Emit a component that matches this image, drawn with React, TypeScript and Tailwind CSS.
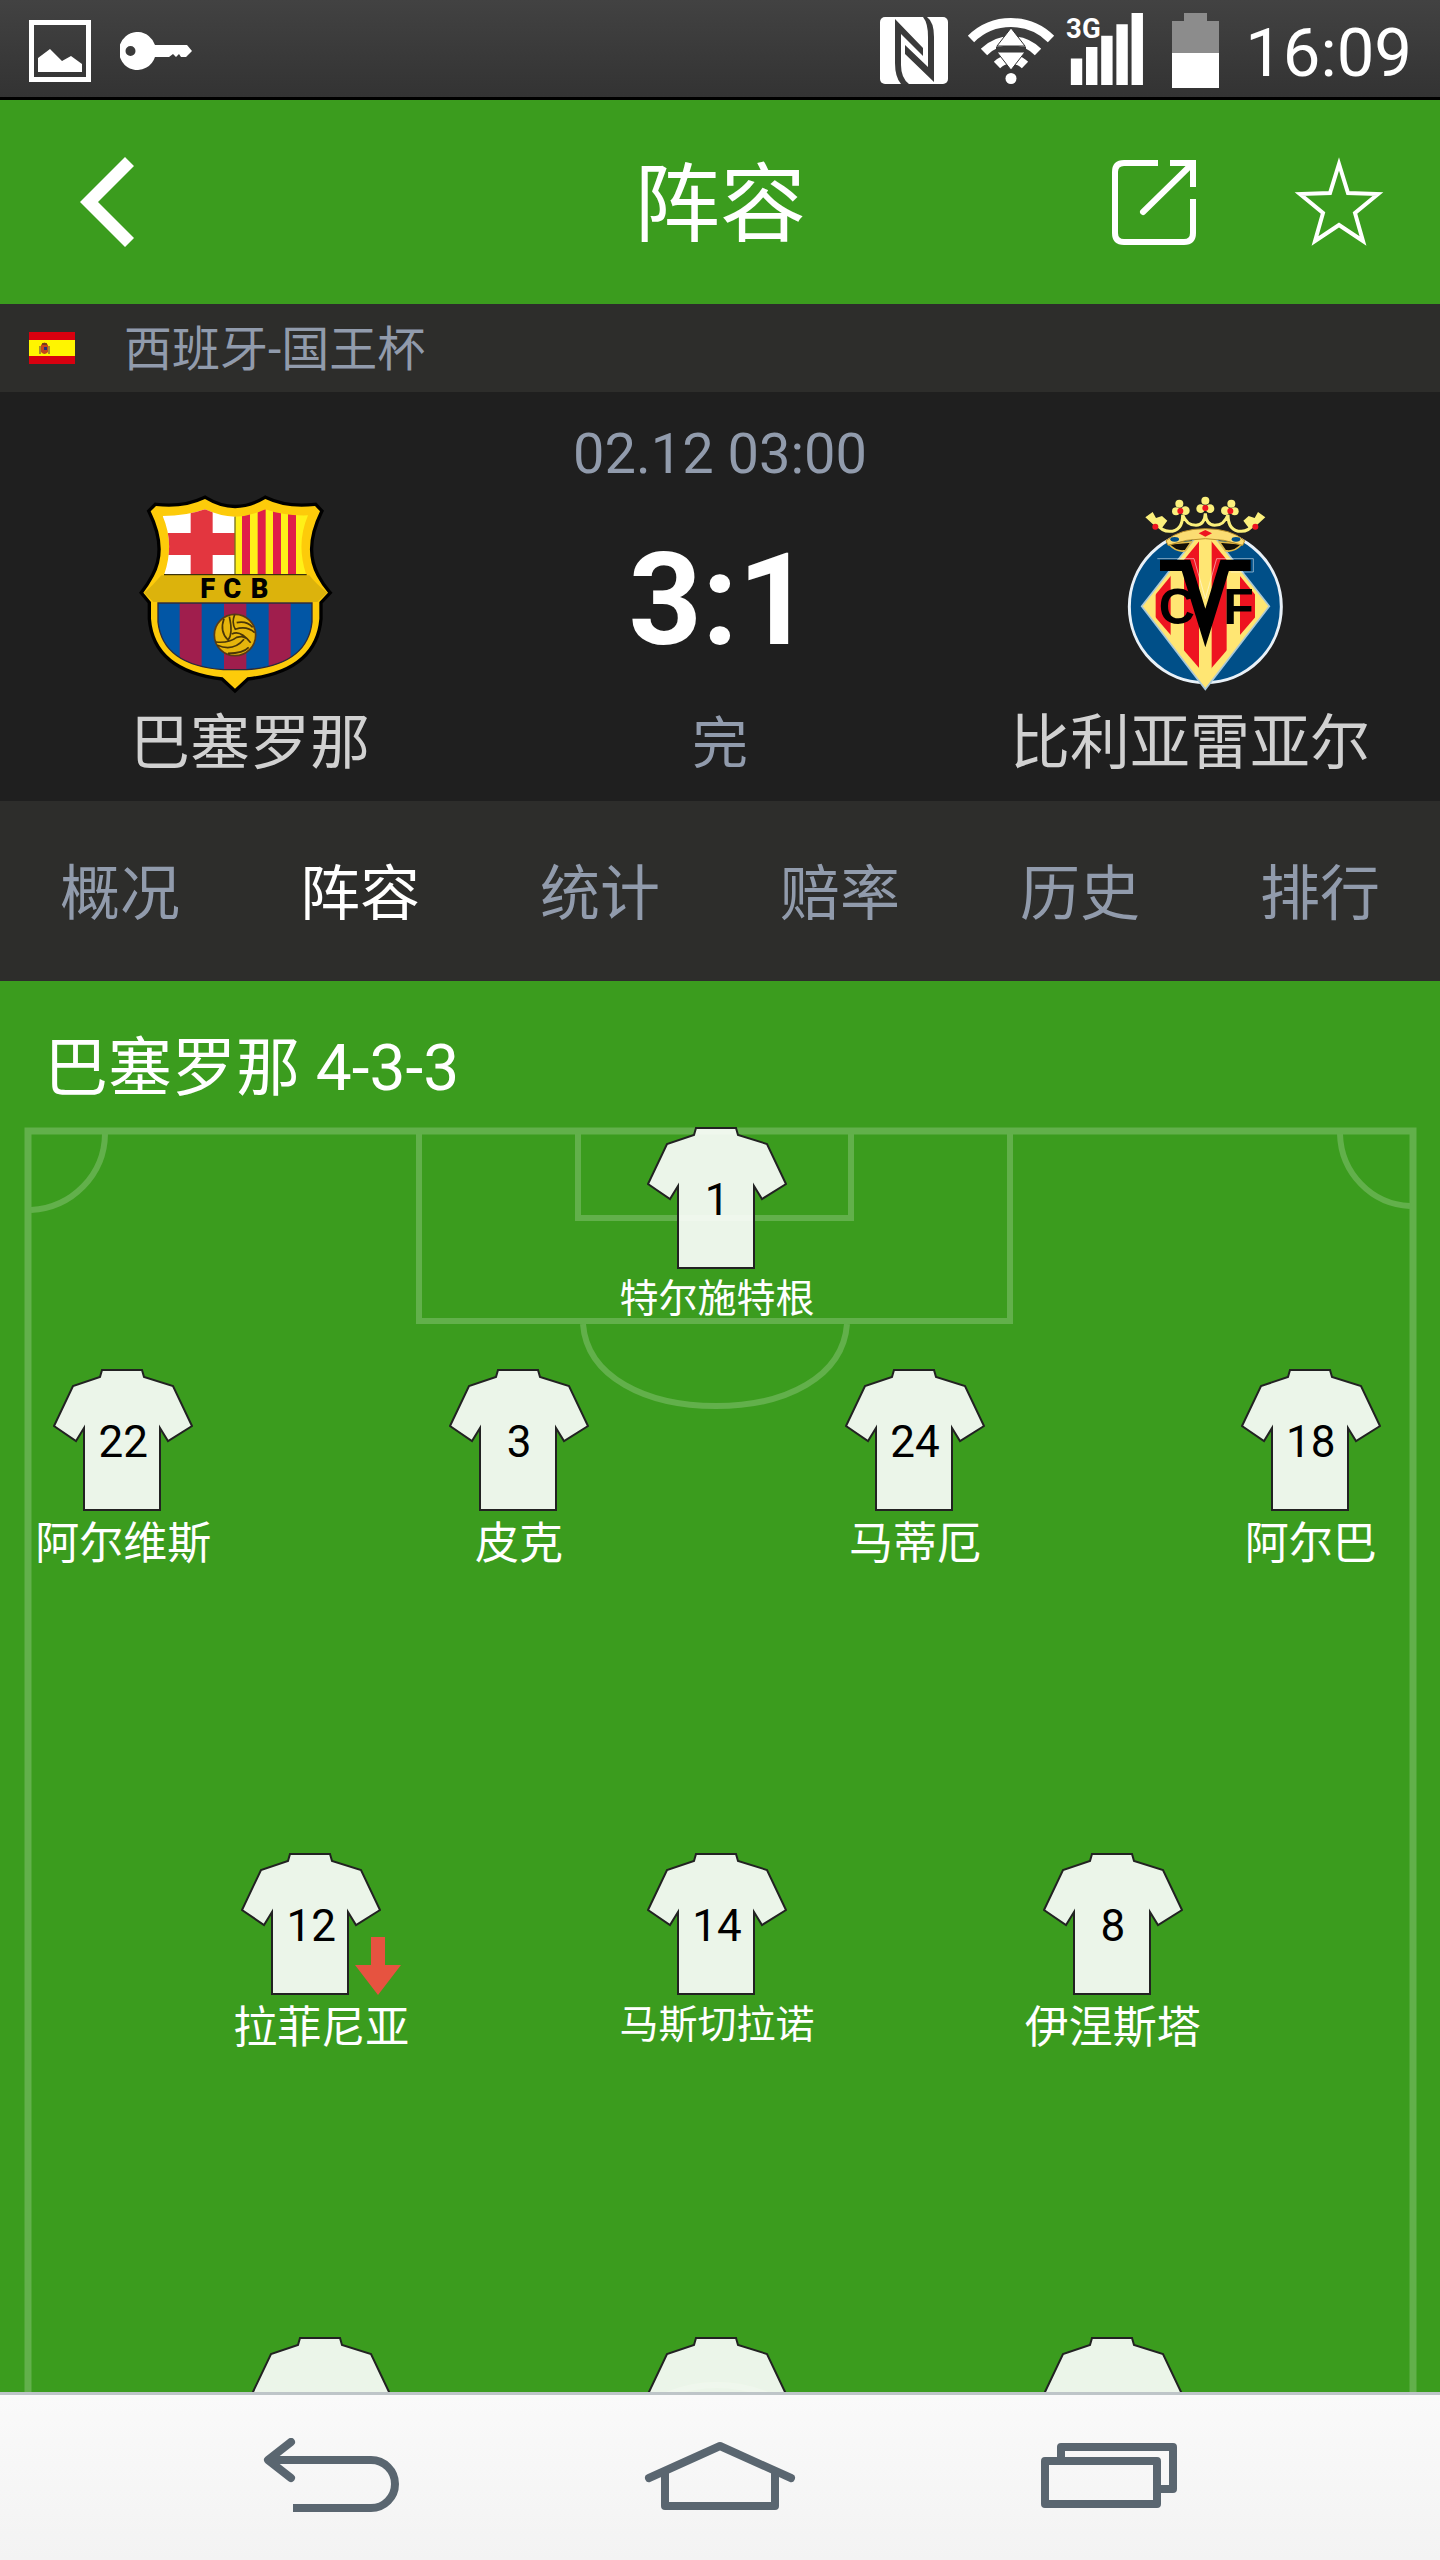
import { ReactNode } from 'react'

interface Player {
  number?: number
  name?: string
  substituted?: boolean
}

interface LineProps {
  players: Player[]
  tall?: boolean
}

const tabs = ['概况', '阵容', '统计', '赔率', '历史', '排行']

const lineup: LineProps[] = [
  { players: [{ number: 1, name: '特尔施特根' }] },
  {
    tall: true,
    players: [
      { number: 22, name: '阿尔维斯' },
      { number: 3, name: '皮克' },
      { number: 24, name: '马蒂厄' },
      { number: 18, name: '阿尔巴' },
    ],
  },
  {
    tall: true,
    players: [
      { number: 12, name: '拉菲尼亚', substituted: true },
      { number: 14, name: '马斯切拉诺' },
      { number: 8, name: '伊涅斯塔' },
    ],
  },
  { tall: true, players: [{}, {}, {}] },
]

function StatusBar() {
  return (
    <div className="flex h-[100px] shrink-0 items-center border-b-[3px] border-black bg-linear-to-b from-[#424242] to-[#333333] pt-1 pr-7 pl-[29px] text-white">
      {/* Notifications */}
      <svg className="h-[62px] w-[62px] shrink-0" viewBox="0 0 62 62" fill="#fff" aria-hidden="true">
        <path fillRule="evenodd" d="M0 0H62V62H0ZM5 5V57H57V5Z" />
        <path d="M9 38L21 29L33 41L42 36L53 44V52H9Z" />
      </svg>
      <svg className="ml-[29px] h-[38px] w-[72px] shrink-0" viewBox="0 0 72 38" fill="#fff" aria-hidden="true">
        <path
          fillRule="evenodd"
          d="M18.500 0A18.500 19 0 0 1 35 13H67L72 19L66 25H61L59 22L56 25L53 22L49 25H35A18.500 19 0 1 1 18.500 0ZM10.500 14A5 5 0 1 0 10.500 24A5 5 0 1 0 10.500 14Z"
        />
      </svg>

      <div className="ml-auto flex items-center">
        {/* NFC */}
        <svg className="h-[67px] w-[68px] shrink-0" viewBox="0 0 68 67" aria-hidden="true">
          <rect width="68" height="67" rx="5" fill="#fff" />
          <path
            fill="#3a3a3a"
            d="M15 2L43 31V39L21 17V48Q21 61 29 67H21Q15 60 15 46ZM47 0Q54 5 54 20V65L25 37V28L48 50V20Q48 6 43 0Z"
          />
        </svg>
        {/* Wi-Fi */}
        <svg className="ml-[19px] h-[67px] w-[88px] shrink-0" viewBox="0 0 88 67" aria-hidden="true">
          <g fill="none" stroke="#fff" strokeWidth="9">
            <path d="M4 22A57 57 0 0 1 84 22" />
            <path d="M17 35A38 38 0 0 1 71 35" />
            <path d="M30 48A20 20 0 0 1 58 48" />
          </g>
          <path d="M44 11L58 29H30ZM30 35H58L44 53Z" fill="#fff" stroke="#333" strokeWidth="1" />
          <path d="M29 32H59" stroke="#3a3a3a" strokeWidth="5" />
          <circle cx="44" cy="61.500" r="5.500" fill="#fff" />
        </svg>
        {/* Mobile signal */}
        <svg className="ml-[9px] h-[78px] w-[82px] shrink-0 pb-1" viewBox="0 0 82 78" fill="#fff" aria-hidden="true">
          <path d="M5 49h12v28h-12zM21 37h12v40h-12zM37 25h12v52h-12zM53 13h12v64h-12zM69 1h12v76h-12z" />
          <text x="0" y="27" fontSize="29" fontWeight="700" fontFamily="Roboto, sans-serif">3G</text>
        </svg>
        {/* Battery */}
        <svg className="ml-[26px] h-[75px] w-[47px] shrink-0" viewBox="0 0 47 75" aria-hidden="true">
          <path d="M12 0H35V8H47V40H0V8H12Z" fill="#8c8c8c" />
          <path d="M0 40H47V75H0Z" fill="#fff" />
        </svg>
        <span className="ml-[26px] pt-1 text-[67px] leading-[80px]">16:09</span>
      </div>
    </div>
  )
}

function Header() {
  return (
    <header className="grid h-[204px] shrink-0 grid-cols-[1fr_auto_1fr] items-center bg-[#3b9c1e] pr-14 pl-20 text-white">
      <button aria-label="Back" className="justify-self-start">
        <svg className="h-[90px] w-[54px]" viewBox="0 0 54 90" fill="#fff">
          <path d="M45 0L54 9L18 45L54 81L45 90L0 45Z" />
        </svg>
      </button>
      <h1 className="pt-2 pr-6 text-[86px] leading-[96px]">阵容</h1>
      <div className="flex items-center gap-[98px] justify-self-end">
        <button aria-label="Share">
          <svg className="h-[86px] w-[84px]" viewBox="0 0 84 86" fill="none" stroke="#fff" strokeWidth="6">
            <path d="M46 4H12Q3 4 3 13V74Q3 83 12 83H72Q81 83 81 74V40" />
            <path d="M58 4H81V28" />
            <path d="M80 5L31 53" strokeLinecap="round" />
          </svg>
        </button>
        <button aria-label="Favourite">
          <svg className="h-[90px] w-[90px]" viewBox="0 0 90 90" fill="none" stroke="#fff" strokeWidth="4">
            <path d="M45 7L54 36L84 37L61 56L69 84L45 68L21 84L29 56L6 37L36 36Z" />
          </svg>
        </button>
      </div>
    </header>
  )
}

function SpainFlag() {
  return (
    <svg className="h-8 w-[46px] shrink-0" viewBox="0 0 46 32" role="img" aria-label="Spain">
      <path d="M0 0H46V32H0Z" fill="#d8000f" />
      <path d="M0 8H46V24H0Z" fill="#fff500" />
      <path d="M11 14v8M20 14v8" stroke="#8a6a3a" strokeWidth="1.500" />
      <path d="M12 13Q15.500 8 19 13V20Q15.500 24 12 20Z" fill="#c4451c" />
      <path d="M15 15h3v3h-3z" fill="#23307a" />
      <path d="M13 12h5" stroke="#5b3a1a" strokeWidth="1.500" />
    </svg>
  )
}

function BarcelonaCrest() {
  return (
    <svg className="h-[204px] w-[200px]" viewBox="105 40 600 612" role="img" aria-label="FC Barcelona">
      <defs>
        <clipPath id="barca-top">
          <path d="M188 112Q260 112 315 92Q360 113 405 114Q450 113 496 92Q550 112 624 110Q588 195 618 286H193Q224 195 188 112Z" />
        </clipPath>
        <clipPath id="barca-bottom">
          <path d="M174 373H636V430Q622 560 440 573H370Q188 560 174 430Z" />
        </clipPath>
        <path
          id="barca-shield"
          d="M152 98L168 82Q250 92 315 61Q405 116 496 61Q560 92 645 82L660 98Q605 210 650 292Q666 322 684 342L658 370V420Q645 572 442 596L405 630L368 596Q165 572 153 420V370L130 342Q146 322 162 292Q207 210 152 98Z"
        />
      </defs>
      <use href="#barca-shield" fill="#000" stroke="#000" strokeWidth="20" />
      <use href="#barca-shield" fill="#fdcb0a" />
      <path d="M132 342Q160 320 184 290H628Q650 318 682 342L652 370H160Z" fill="#dcb30c" />
      <g clipPath="url(#barca-top)">
        <path d="M180 80H405V290H180Z" fill="#fff" />
        <path d="M272 80H338V163H405V229H338V290H272V229H180V163H272Z" fill="#e3363f" />
        <path d="M405 80H640V290H405Z" fill="#fff018" />
        <path d="M426 80h24v210h-24zM473 80h24v210h-24zM519 80h24v210h-24zM564 80h24v210h-24z" fill="#e01f49" />
        <path d="M405 80V290" stroke="#77701a" strokeWidth="4" />
      </g>
      <g clipPath="url(#barca-bottom)">
        <path d="M170 370H640V580H170Z" fill="#0256a5" />
        <path d="M239 370h66v210h-66zM372 370h67v210h-67zM506 370h66v210h-66z" fill="#a01e4d" />
      </g>
      <path d="M174 373H636V430Q622 560 440 573H370Q188 560 174 430Z" fill="none" stroke="#2c2a3c" strokeWidth="4" />
      <path d="M192 288H620" stroke="#3b320c" strokeWidth="4" />
      <g fontSize="82" fontWeight="900" fontFamily="Roboto, sans-serif">
        <text x="301" y="359">F</text>
        <text x="370" y="359">C</text>
        <text x="452" y="359">B</text>
      </g>
      <circle cx="405" cy="469" r="62" fill="#e6b50c" stroke="#5a3b16" strokeWidth="5" />
      <g fill="none" stroke="#4a3608" strokeWidth="5">
        <path d="M372 420Q358 458 384 484Q400 466 388 414M404 408Q394 432 406 452Q440 440 464 462M396 466Q420 452 452 492M348 490Q386 494 410 476Q432 470 438 480M352 500Q400 520 432 482M384 524Q430 524 446 506M410 432Q440 426 458 446" />
      </g>
    </svg>
  )
}

function VillarrealCrest() {
  return (
    <svg className="h-[204px] w-40" viewBox="375 40 480 612" role="img" aria-label="Villarreal CF">
      <defs>
        <clipPath id="villarreal-stripes">
          <path d="M438 383L616 165L794 383L616 590Z" />
        </clipPath>
      </defs>
      <circle cx="616" cy="384" r="228" fill="#004f88" stroke="#e9f1f8" strokeWidth="9" />
      <path d="M425 383L590 172H642L808 383L616 632Z" fill="#ffe673" stroke="#a9c8d8" strokeWidth="5" />
      <path
        clipPath="url(#villarreal-stripes)"
        fill="#ee1420"
        d="M467 150h45v480h-45zM552 150h45v480h-45zM635 150h45v480h-45zM720 150h45v480h-45z"
      />
      <g fontSize="150" fontWeight="700" fontFamily="'Liberation Sans Narrow', 'Liberation Sans', sans-serif">
        <text x="476" y="436">C</text>
        <text x="670" y="436">F</text>
      </g>
      {/* Chevron between the two initials */}
      <path d="M472 240H582L616 360L650 240H760V280H692" fill="none" stroke="#fff" strokeOpacity="0.500" strokeWidth="3" />
      <path d="M480 260H558L616 448L674 260H752" fill="none" stroke="#000" strokeWidth="34" strokeMiterlimit="10" />
      {/* Crown */}
      <path d="M506 196Q530 222 556 216L574 190ZM726 196Q702 222 676 216L658 190Z" fill="#141008" stroke="#e0bb4a" strokeWidth="5" />
      <path d="M498 186Q540 150 616 150Q692 150 734 186L728 200Q616 160 504 200Z" fill="#fbdc72" stroke="#b98f2a" strokeWidth="3" />
      <path
        d="M470 136Q486 158 508 158Q548 158 548 108Q560 140 588 140Q614 138 616 104Q618 138 644 140Q672 140 684 108Q684 158 724 158Q746 158 762 136"
        fill="none"
        stroke="#fbf07c"
        strokeWidth="9"
      />
      <g fill="#fbf07c">
        <circle cx="616" cy="66" r="12" />
        <circle cx="602" cy="90" r="13" />
        <circle cx="630" cy="90" r="13" />
        <circle cx="538" cy="75" r="12" />
        <circle cx="528" cy="98" r="12" />
        <circle cx="556" cy="96" r="13" />
        <circle cx="694" cy="75" r="12" />
        <circle cx="704" cy="98" r="12" />
        <circle cx="676" cy="96" r="13" />
        <path d="M436 116L458 100L468 118L486 112L502 126L484 150L462 140Z" />
        <path d="M796 116L774 100L764 118L746 112L730 126L748 150L770 140Z" />
      </g>
      <g fill="#ee1420">
        <circle cx="616" cy="88" r="9" />
        <circle cx="541" cy="97" r="9" />
        <circle cx="691" cy="97" r="9" />
        <circle cx="466" cy="144" r="9" />
        <circle cx="766" cy="144" r="9" />
        <path d="M596 164L616 154L636 164L616 174Z" />
      </g>
      <g fill="#004f88">
        <ellipse cx="524" cy="182" rx="13" ry="7" />
        <ellipse cx="708" cy="182" rx="13" ry="7" />
      </g>
    </svg>
  )
}

function MatchSummary() {
  return (
    <section className="shrink-0 bg-[#1f1f1f] pt-[30px] pb-[17px] text-center text-[#919bac]">
      <p className="text-[56px] leading-[64px]">02.12 03:00</p>
      <div className="mt-[6px] grid grid-cols-[47fr_50fr_47fr] place-items-center">
        <BarcelonaCrest />
        <p className="pt-3 text-[128px] leading-[128px] font-bold text-white">3:1</p>
        <VillarrealCrest />
      </div>
      <div className="mt-2 grid grid-cols-[50fr_44fr_50fr] items-center text-[60px] leading-[80px] text-[#d1d1d1]">
        <h2>巴塞罗那</h2>
        <p className="text-[56px] text-[#919bac]">完</p>
        <h2>比利亚雷亚尔</h2>
      </div>
    </section>
  )
}

function Tabs() {
  return (
    <nav className="grid h-[180px] shrink-0 grid-cols-6 bg-[#2d2d2b]">
      {tabs.map((tab) => (
        <button
          key={tab}
          aria-current={tab === '阵容' ? 'page' : undefined}
          className={`pt-2 text-[60px] leading-[80px] ${tab === '阵容' ? 'text-white' : 'text-[#919bac]'}`}
        >
          {tab}
        </button>
      ))}
    </nav>
  )
}

function PitchLines() {
  return (
    <svg
      className="absolute inset-x-0 top-0 h-[1500px] w-full"
      viewBox="0 0 1440 1500"
      preserveAspectRatio="none"
      fill="none"
      stroke="#62b04b"
      strokeWidth="6"
      aria-hidden="true"
    >
      <path d="M28 1500V4H1413V1500" strokeWidth="7" />
      <path d="M105 7A78 77 0 0 1 31 83M1340 7A73 74 0 0 0 1410 79" />
      <path d="M419 7V194H1010V7" />
      <path d="M578 7V91H851V7" />
      <path d="M583 197C587 250 646 279 716 279C786 279 843 250 847 197" />
      <ellipse cx="717" cy="1390" rx="132" ry="132" />
    </svg>
  )
}

/**
 * Shirt with the squad number on the chest.
 * The shirt is slightly see-through, so the pitch lines show below it.
 */
function Shirt({ number }: { number?: number }) {
  return (
    <div className="relative h-[142px] w-[140px] shrink-0">
      <svg className="h-full w-full" viewBox="0 0 140 142" aria-hidden="true">
        <path
          d="M49 1H89L91 8L120 17L139 57L115 72L107 59V141H31V59L23 72L1 57L20 17L47 8Z"
          fill="#fff"
          fillOpacity="0.900"
          stroke="#222"
          strokeWidth="2"
        />
      </svg>
      <span className="absolute inset-0 text-center text-[44px] leading-[146px] text-black">{number}</span>
    </div>
  )
}

function PlayerCell({ player }: { player: Player }) {
  const nameSize = player.name && player.name.length > 4 ? 'text-[39px] leading-[46px]' : 'text-[44px] leading-[52px]'

  return (
    <li className="flex w-[27.6%] shrink-0 flex-col items-center">
      <div className="flex items-end">
        <Shirt number={player.number} />
        {player.substituted && (
          <svg className="-ml-[26px] h-[58px] w-[46px]" viewBox="0 0 46 58" role="img" aria-label="Substituted">
            <path d="M16 0H30V28H46L23 58L0 28H16Z" fill="#e65340" />
          </svg>
        )}
      </div>
      {player.name && <span className={`mt-[7px] whitespace-nowrap text-white ${nameSize}`}>{player.name}</span>}
    </li>
  )
}

function Pitch() {
  return (
    <main className="min-h-0 flex-1 overflow-y-auto bg-[#3b9c1e] [scrollbar-width:none]">
      <h2 className="px-11 pt-12 pb-[18px] text-[64px] leading-[80px] text-white">巴塞罗那 4-3-3</h2>
      <div className="relative overflow-hidden">
        <PitchLines />
        <div className="relative pr-[6px]">
          {lineup.map((line, i) => (
            <ul key={i} className={`flex justify-center ${line.tall ? 'h-[484px]' : 'h-[242px]'}`}>
              {line.players.map((player, j) => (
                <PlayerCell key={j} player={player} />
              ))}
            </ul>
          ))}
        </div>
      </div>
    </main>
  )
}

function NavButton({ label, children }: { label: string; children: ReactNode }) {
  return (
    <button aria-label={label} className="flex items-center justify-center">
      {children}
    </button>
  )
}

function SystemNav() {
  return (
    <nav className="grid h-[168px] shrink-0 grid-cols-3 border-t-[3px] border-[#bec5c8] bg-linear-to-b from-[#fafafa] to-[#f3f3f3] px-[9.5%] pb-1">
      <NavButton label="Back">
        <svg className="h-[76px] w-[136px]" viewBox="0 0 136 76" fill="none" stroke="#5a6670" strokeWidth="8">
          <path d="M28 4L5 22L28 40" strokeLinecap="round" strokeLinejoin="round" />
          <path d="M6 22H108A24 24 0 0 1 108 70H30" />
        </svg>
      </NavButton>
      <NavButton label="Home">
        <svg className="h-[70px] w-[152px]" viewBox="0 0 152 70" fill="none" stroke="#5a6670" strokeWidth="8">
          <path d="M5 37L76 5L147 37" strokeLinecap="round" strokeLinejoin="round" />
          <path d="M21 31V65H131V31" strokeLinejoin="round" />
        </svg>
      </NavButton>
      <NavButton label="Recent apps">
        <svg className="h-[66px] w-[136px]" viewBox="0 0 136 66" fill="none" stroke="#5a6670" strokeWidth="8" strokeLinejoin="round">
          <path d="M4 18H116V61H4Z" />
          <path d="M20 14V4H132V46H120" />
        </svg>
      </NavButton>
    </nav>
  )
}

export default function App() {
  return (
    <div className="flex h-screen flex-col overflow-hidden font-[Roboto,'Noto_Sans_CJK_SC',sans-serif]" lang="zh-CN">
      <StatusBar />
      <Header />
      <div className="flex h-[88px] shrink-0 items-center gap-[49px] bg-[#2d2d2b] pl-[29px] text-[48px] leading-[64px] text-[#919bac]">
        <SpainFlag />
        <span className="pt-1">西班牙-国王杯</span>
      </div>
      <MatchSummary />
      <Tabs />
      <Pitch />
      <SystemNav />
    </div>
  )
}
